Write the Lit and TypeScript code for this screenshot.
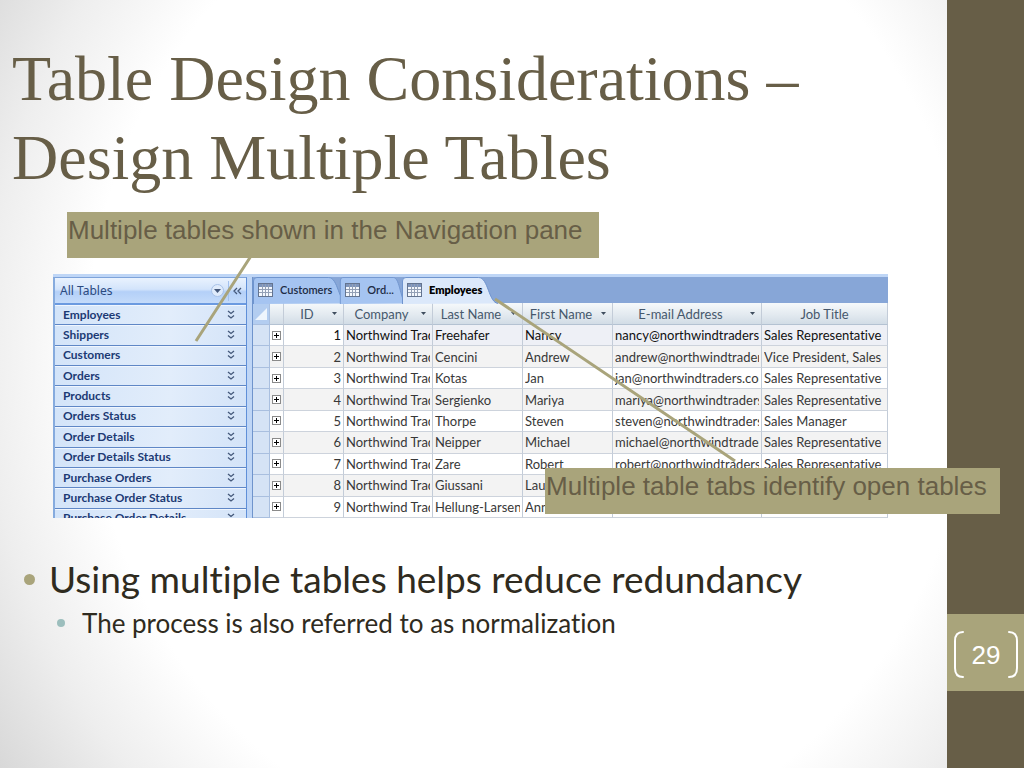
import { LitElement, html, css, svg } from "lit";
import { customElement, state } from "lit/decorators.js";
import { classMap } from "lit/directives/class-map.js";

const NAV_ITEMS = [
  "Employees",
  "Shippers",
  "Customers",
  "Orders",
  "Products",
  "Orders Status",
  "Order Details",
  "Order Details Status",
  "Purchase Orders",
  "Purchase Order Status",
  "Purchase Order Details",
];

const TABS = ["Customers", "Ord...", "Employees"];

const COLUMNS = [
  { key: "id", label: "ID", menu: true },
  { key: "company", label: "Company", menu: true },
  { key: "last", label: "Last Name", menu: true },
  { key: "first", label: "First Name", menu: true },
  { key: "email", label: "E-mail Address", menu: true },
  { key: "job", label: "Job Title", menu: false },
];

const ROWS = [
  ["Freehafer", "Nancy", "nancy@northwindtraders.com", "Sales Representative"],
  ["Cencini", "Andrew", "andrew@northwindtraders.com", "Vice President, Sales"],
  ["Kotas", "Jan", "jan@northwindtraders.com", "Sales Representative"],
  ["Sergienko", "Mariya", "mariya@northwindtraders.com", "Sales Representative"],
  ["Thorpe", "Steven", "steven@northwindtraders.com", "Sales Manager"],
  ["Neipper", "Michael", "michael@northwindtraders.com", "Sales Representative"],
  ["Zare", "Robert", "robert@northwindtraders.com", "Sales Representative"],
  ["Giussani", "Laura", "laura@northwindtraders.com", "Sales Coordinator"],
  ["Hellung-Larsen", "Anne", "anne@northwindtraders.com", "Sales Representative"],
];

@customElement("nav-pane")
class NavPane extends LitElement {
  static styles = css`
    :host {
      display: flex;
      flex-direction: column;
      overflow: hidden;
      box-sizing: border-box;
      border-left: 2px solid #86abde;
      border-right: 1px solid #5f8fd8;
      border-top: 1px solid #7ea3da;
      font-family: Lato, sans-serif;
      color: #1c3a74;
    }
    .head {
      flex: none;
      display: flex;
      align-items: center;
      height: 27px;
      padding-left: 5px;
      box-sizing: border-box;
      background: linear-gradient(#e9f2fe, #d3e4fb 45%, #b4d0f8 55%, #c4dbfa);
      border-bottom: 2px solid #6b9ae0;
    }
    .title {
      flex: 1;
      margin: 0;
      font: 400 12px/20px "Noto Sans", sans-serif;
      color: #2b4a80;
    }
    button {
      display: grid;
      place-items: center;
      border: 0;
      padding: 0;
      background: none;
      color: #44587a;
    }
    .menu {
      width: 13px;
      height: 13px;
      border-radius: 50%;
      background: #dfebfb;
      border: 1px solid #a8c2e8;
      margin-right: 4px;
    }
    .close {
      width: 18px;
      height: 20px;
      border-left: 1px solid #a3c1ee;
    }
    .list {
      flex: none;
      list-style: none;
      margin: 0;
      padding: 0;
      display: grid;
      grid-template-rows: repeat(11, 1fr);
      height: 224px;
    }
    .item {
      display: flex;
      align-items: center;
      justify-content: space-between;
      padding: 0 11px 0 8px;
      background: linear-gradient(100deg, #d3e4f9, #e2edfb 60%, #d3e3f8);
      border-bottom: 1px solid #5f87c6;
      box-shadow: inset 0 1px 0 #f0f6fe;
      font-size: 12px;
      line-height: 16px;
      font-weight: 700;
      white-space: nowrap;
    }
  `;

  render() {
    return html`
      <div class="head">
        <h2 class="title">All Tables</h2>
        <button class="menu" aria-label="Choose category">
          <svg width="7" height="4"><path d="M0 0h7L3.5 4z" fill="currentColor" /></svg>
        </button>
        <button class="close" aria-label="Close pane">
          <svg width="9" height="8" fill="none" stroke="currentColor" stroke-width="1.3">
            <path d="M4 1L1 4l3 3M8 1L5 4l3 3" />
          </svg>
        </button>
      </div>
      <ul class="list">
        ${NAV_ITEMS.map(
          (name) => html`<li class="item">
            <span>${name}</span>
            <button aria-label="Expand ${name}">
              <svg width="8" height="10" fill="none" stroke="currentColor" stroke-width="1.3">
                <path d="M1 1l3 2.500L7 1M1 5.500l3 2.500 3-2.500" />
              </svg>
            </button>
          </li>`
        )}
      </ul>
    `;
  }
}

@customElement("data-sheet")
class DataSheet extends LitElement {
  @state() private active = "Employees";

  static styles = css`
    :host {
      display: block;
      min-width: 0;
      overflow: hidden;
      border-left: 1px solid #6f94cc;
      background: #fff;
      font-family: Lato, "Open Sans", sans-serif;
      font-variant-ligatures: none;
    }
    .tabs {
      display: flex;
      height: 26px;
      background: #87a6d7;
    }
    .tab {
      position: relative;
      display: flex;
      align-items: center;
      gap: 7px;
      height: 26px;
      padding: 0 8px 0 5px;
      border: 0;
      background: none;
      color: #1d2b45;
      font: 600 11px/16px Lato, sans-serif;
      isolation: isolate;
    }
    .tab svg.shape {
      position: absolute;
      inset: 0;
      width: 100%;
      height: 100%;
      z-index: -1;
      overflow: visible;
    }
    .shape path {
      fill: #a5c4f1;
      stroke: #6e93cd;
    }
    .tab.on {
      color: #000;
      font-weight: 800;
    }
    .tab.on .shape path {
      fill: #dbe8fa;
    }
    .sheet {
      width: 100%;
      height: 215px;
      table-layout: fixed;
      border-collapse: separate;
      border-spacing: 0;
      font-size: 13px;
      line-height: 18px;
      color: #383838;
    }
    .c-sel { width: 17px; }
    .c-exp { width: 14px; }
    .c-id { width: 60px; }
    .c-company { width: 89px; }
    .c-last,
    .c-first { width: 90px; }
    .c-email { width: 149px; }
    th,
    td {
      box-sizing: border-box;
      padding: 0 2px;
      border-right: 1px solid #c3ccd8;
      border-bottom: 1px solid #cdd3dc;
      font-weight: 400;
      text-align: left;
      white-space: nowrap;
    }
    th {
      height: 22px;
      background: linear-gradient(#f6f9fb, #e3eaf0 55%, #d2dce6);
      border-bottom-color: #b4c2d2;
      color: #46586c;
    }
    td.sel,
    th.sel {
      padding: 0;
      background: #d5e3f5;
      border-color: #a9bfdf;
    }
    th.sel {
      background: #b3cdf0;
      text-align: right;
    }
    .sel svg {
      display: block;
      margin-left: auto;
    }
    .label {
      display: flex;
      align-items: center;
    }
    .name {
      flex: 1;
      text-align: center;
    }
    .label button {
      flex: none;
      width: 13px;
      height: 16px;
      display: grid;
      place-items: center;
      border: 0;
      padding: 0;
      background: none;
      color: #3f4d5e;
    }
    .value { overflow: hidden; }
    .even td:not(.sel) { background: #f3f3f3; }
    .first td:not(.sel):not(.exp):not(.num) { background: #eef0f6; }
    .first { color: #111; }
    td.num { text-align: right; }
    td.exp { padding: 0; }
    .plus {
      display: block;
      width: 9px;
      height: 9px;
      margin: 0 auto;
      padding: 0;
      border: 1px solid #8a8a8a;
      background: #fff;
      color: #000;
    }
    .plus svg { display: block; }
  `;

  private tab(name: string) {
    return html`<button
      class=${classMap({ tab: true, on: this.active === name })}
      @click=${() => (this.active = name)}
    >
      <svg class="shape" viewBox="0 0 90 26" preserveAspectRatio="none">
        <path d="M.5 27V4Q.5 .5 4 .5H78C88 .5 88 26 98 26.500" />
      </svg>
      <svg width="15" height="14">
        <rect x=".5" y=".5" width="14" height="13" fill="#f4f8fd" stroke="#64748f" />
        <rect x="1" y="1" width="13" height="3" fill="#7d94bb" />
        <path d="M1 6.500h13M1 9.500h13M4.500 1v12M7.500 1v12M10.500 1v12" stroke="#93a0b6" fill="none" />
      </svg>
      <span>${name}</span>
    </button>`;
  }

  render() {
    return html`
      <div class="tabs">${TABS.map((t) => this.tab(t))}</div>
      <table class="sheet">
        <colgroup>
          <col class="c-sel" />
          <col class="c-exp" />
          ${COLUMNS.map((c) => html`<col class="c-${c.key}" />`)}
        </colgroup>
        <thead>
          <tr>
            <th class="sel" aria-label="Select all">
              <svg width="15" height="14"><path d="M13 1v12H1z" fill="#eef5fd" /></svg>
            </th>
            <th aria-label="Expand"></th>
            ${COLUMNS.map(
              (c) => html`<th scope="col">
                <div class="label">
                  <span class="name">${c.label}</span>
                  ${c.menu
                    ? html`<button aria-label="Filter ${c.label}">
                        <svg width="5" height="3"><path d="M0 0h5L2.500 3z" fill="currentColor" /></svg>
                      </button>`
                    : ""}
                </div>
              </th>`
            )}
          </tr>
        </thead>
        <tbody>
          ${ROWS.map(
            (r, i) => html`<tr class=${classMap({ first: i === 0, even: i % 2 === 1 })}>
              <td class="sel"></td>
              <td class="exp">
                <button class="plus" aria-label="Expand record ${i + 1}">
                  <svg width="7" height="7"><path d="M1 3.500h5M3.500 1v5" stroke="currentColor" /></svg>
                </button>
              </td>
              <td class="num">${i + 1}</td>
              ${["Northwind Traders", ...r].map((v) => html`<td><div class="value">${v}</div></td>`)}
            </tr>`
          )}
        </tbody>
      </table>
    `;
  }
}

@customElement("app-root")
class AppRoot extends LitElement {
  static styles = css`
    :host {
      display: grid;
      grid-template-columns: minmax(0, 1fr) 77px;
      min-height: 100vh;
      overflow: hidden;
      background: #fff;
    }
    .slide {
      padding: 39px 0 40px;
      background: radial-gradient(ellipse 72% 100% at 56% 46%, #fff 65%, #eeeeee 80%, #d6d6d6 96%);
    }
    .title {
      margin: 0 0 0 12px;
      font: 400 64px/79px "Liberation Serif", serif;
      color: #675e47;
    }
    .figure {
      position: relative;
      margin: 77px 59px 0 53px;
    }
    .window {
      display: grid;
      grid-template-columns: 194px minmax(0, 1fr);
      column-gap: 5px;
      height: 244px;
      padding-top: 3px;
      box-sizing: border-box;
      overflow: hidden;
      background: #bfd6f6;
    }
    .callout {
      position: absolute;
      z-index: 2;
      box-sizing: border-box;
      height: 46px;
      padding: 3px 1px;
      background: #a9a47b;
      color: #675e47;
      font: 26px/30px "Liberation Sans", Arial, sans-serif;
      white-space: nowrap;
    }
    .nav-note {
      left: 14px;
      top: -62px;
      width: 532px;
    }
    .tab-note {
      left: 492px;
      top: 194px;
      width: 455px;
    }
    .lines {
      position: absolute;
      left: 0;
      top: -20px;
      overflow: visible;
    }
    .points,
    .sub {
      list-style: none;
      margin: 0;
      padding: 0;
      font-family: Lato, sans-serif;
      font-variant-ligatures: none;
      color: #2f2b20;
    }
    .points {
      margin: 37px 0 0 24px;
      font-size: 37px;
      line-height: 48px;
    }
    .sub {
      margin: 0 0 0 33px;
      font-size: 26px;
      line-height: 40px;
    }
    .line {
      display: flex;
      align-items: center;
      gap: 14px;
    }
    .line::before {
      content: "";
      flex: none;
      width: 11px;
      height: 11px;
      border-radius: 50%;
      background: #a9a47b;
    }
    .sub .line {
      gap: 17px;
    }
    .sub .line::before {
      width: 8px;
      height: 8px;
      background: #9cbebd;
    }
    .side {
      display: grid;
      grid-template-rows: 1fr 77px 77px;
      background: #675e47;
    }
    .number {
      grid-row: 2;
      display: flex;
      align-items: center;
      justify-content: space-between;
      padding: 4px 6px 0 7px;
      background: #a9a47b;
      color: #fff;
      font: 26px/32px "Liberation Sans", Arial, sans-serif;
    }
  `;

  render() {
    return html`
      <main class="slide">
        <h1 class="title">Table Design Considerations –<br />Design Multiple Tables</h1>
        <figure class="figure">
          <div class="window">
            <nav-pane></nav-pane>
            <data-sheet></data-sheet>
          </div>
          <svg class="lines" width="700" height="210" fill="none" stroke="#a9a47b" stroke-width="3">
            <path d="M198 2L143 87M442 45L682 207" />
          </svg>
          <div class="callout nav-note">Multiple tables shown in the Navigation pane</div>
          <div class="callout tab-note">Multiple table tabs identify open tables</div>
        </figure>
        <ul class="points">
          <li>
            <div class="line">Using multiple tables helps reduce redundancy</div>
            <ul class="sub">
              <li class="line">The process is also referred to as normalization</li>
            </ul>
          </li>
        </ul>
      </main>
      <aside class="side">
        <div class="number">
          ${this.bracket("M9 1Q1 1 1 10V37Q1 46 9 46")}
          <span>29</span>
          ${this.bracket("M1 1Q9 1 9 10V37Q9 46 1 46")}
        </div>
      </aside>
    `;
  }

  private bracket(d: string) {
    return html`<svg width="10" height="47" fill="none" stroke="#fff" stroke-width="2" stroke-linecap="round">
      ${svg`<path d=${d} />`}
    </svg>`;
  }
}
